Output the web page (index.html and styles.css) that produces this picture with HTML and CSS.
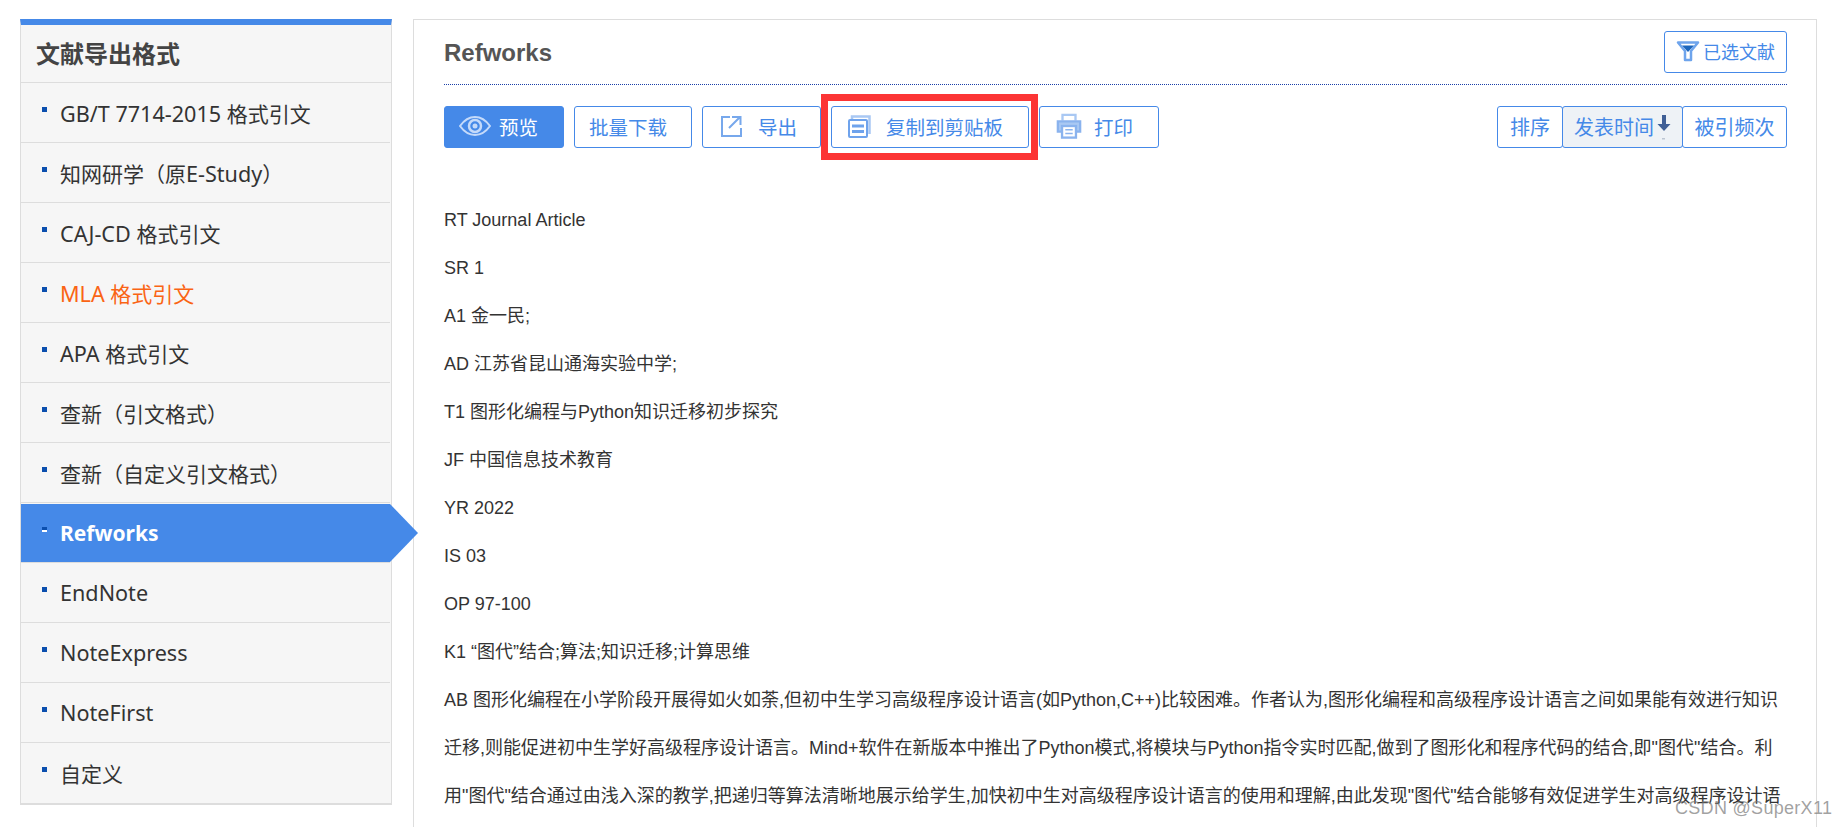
FILE: index.html
```html
<!DOCTYPE html>
<html lang="zh-CN">
<head>
    <meta charset="UTF-8">
    <title>文献导出格式</title>
    <link rel="stylesheet" href="styles.css">
</head>
<body>

<div class="page">
    <!-- 左侧格式列表 -->
    <div class="side">
        <h2 class="side-title">文献导出格式</h2>
        <ul class="side-list">
            <li><span class="dot"></span><span><span class="en">GB/T 7714-2015 </span>格式引文</span></li>
            <li><span class="dot"></span><span>知网研学（原<span class="en">E-Study</span>）</span></li>
            <li><span class="dot"></span><span><span class="en">CAJ-CD </span>格式引文</span></li>
            <li class="orange"><span class="dot"></span><span><span class="en">MLA </span>格式引文</span></li>
            <li><span class="dot"></span><span><span class="en">APA </span>格式引文</span></li>
            <li><span class="dot"></span><span>查新（引文格式）</span></li>
            <li><span class="dot"></span><span>查新（自定义引文格式）</span></li>
            <li class="current"><span class="dot"></span><span>Refworks</span></li>
            <li><span class="dot"></span><span class="en">EndNote</span></li>
            <li><span class="dot"></span><span class="en">NoteExpress</span></li>
            <li><span class="dot"></span><span class="en">NoteFirst</span></li>
            <li><span class="dot"></span><span>自定义</span></li>
        </ul>
    </div>

    <!-- 右侧内容 -->
    <div class="main">
        <div class="main-head">
            <h3 class="main-title">Refworks</h3>
            <a class="btn btn-filter">
                <svg width="24" height="24" viewBox="0 0 24 24"><path d="M2 3.500h20l-7 8.500v9h-6v-9z" fill="#fff" stroke="#6ea4ec" stroke-width="2.500" stroke-linejoin="round"/><path d="M6 6.500h12l-6 6.500z" fill="#1c66bd"/></svg>
                已选文献
            </a>
        </div>

        <div class="toolbar">
            <div class="tools">
                <a class="btn btn-preview">
                    <svg width="32" height="20" viewBox="0 0 32 20" fill="none" stroke="#c4dafa" stroke-width="2"><path d="M1 10C6 3 11 1 16 1s10 2 15 9c-5 7-10 9-15 9S6 17 1 10z"/><circle cx="16" cy="10" r="6" stroke-width="2.500"/><circle cx="16" cy="10" r="2.500" fill="#c4dafa" stroke="none"/></svg>
                    预览
                </a>
                <a class="btn btn-batch">批量下载</a>
                <a class="btn btn-export">
                    <svg width="22" height="22" viewBox="0 0 22 22" fill="none" stroke="#77a8ec" stroke-width="2"><path d="M10 2H2v19h19v-8"/><path d="M12 2h8.500v8M20 2L9 13"/></svg>
                    导出
                </a>
                <a class="btn btn-copy">
                    <svg width="23" height="23" viewBox="0 0 23 23" fill="none" stroke="#6fa3ec" stroke-width="2"><path d="M4 4V1.500h17.500V19" stroke="#a9c8f3" stroke-width="2.500"/><rect x="1" y="5" width="18" height="17" rx="1" fill="#fff"/><path d="M4 11h12M4 16.500h12" stroke-width="3"/></svg>
                    复制到剪贴板
                </a>
                <a class="btn btn-print">
                    <svg width="26" height="26" viewBox="0 0 28 28" fill="none" stroke="#8ab3ee" stroke-width="2.500"><path d="M7 8V2h14v6" stroke="#a9c8f3"/><path d="M6 20H2V9h24v11h-4" fill="#a9c8f3"/><rect x="6.500" y="14" width="15" height="12.500" fill="#fff"/><path d="M10 18h8M10 22h8" stroke-width="1.500"/></svg>
                    打印
                </a>
            </div>
            <div class="sort">
                <a class="btn sort-label">排序</a>
                <a class="btn sort-date">发表时间<svg width="14" height="32" viewBox="0 0 14 32"><path d="M5 5h4v9h4.500L7 21 .5 14H5z" fill="#3f5f96"/><rect x="5" y="28" width="3" height="1.500" fill="#bcc5d2"/></svg></a>
                <a class="btn sort-cite">被引频次</a>
            </div>
        </div>

        <div class="content">
            <p>RT Journal Article</p>
            <p>SR 1</p>
            <p>A1 金一民;</p>
            <p>AD 江苏省昆山通海实验中学;</p>
            <p>T1 图形化编程与Python知识迁移初步探究</p>
            <p>JF 中国信息技术教育</p>
            <p>YR 2022</p>
            <p>IS 03</p>
            <p>OP 97-100</p>
            <p>K1 “图代”结合;算法;知识迁移;计算思维</p>
            <p>AB 图形化编程在小学阶段开展得如火如荼,但初中生学习高级程序设计语言(如Python,C++)比较困难。作者认为,图形化编程和高级程序设计语言之间如果能有效进行知识迁移,则能促进初中生学好高级程序设计语言。Mind+软件在新版本中推出了Python模式,将模块与Python指令实时匹配,做到了图形化和程序代码的结合,即"图代"结合。利用"图代"结合通过由浅入深的教学,把递归等算法清晰地展示给学生,加快初中生对高级程序设计语言的使用和理解,由此发现"图代"结合能够有效促进学生对高级程序设计语言的学习。</p>
        </div>
    </div>
</div>

<div class="watermark">CSDN @SuperX11</div>

</body>
</html>
```

FILE: styles.css
```css
html, body {
    margin: 0;
    height: 100%;
    overflow: hidden;
    background-color: #FFFFFF;
}
.page {
    display: flex;
    gap: 21px;
    padding: 19px 30px 0 20px;
    align-items: flex-start;
}

/* 左侧列表 */
.side {
    width: 372px;
    box-sizing: border-box;
    flex: none;
    background-color: #f6f6f6;
    border: 1px solid #dddddd;
    border-top: 6px solid #4589e8;
    border-bottom: 2px solid #dddddd;
    font-family: "Noto Sans", "Noto Sans CJK SC", sans-serif;
}
.side-title {
    margin: 0;
    height: 58px;
    line-height: 57px;
    padding-left: 15px;
    font-size: 24px;
    font-weight: bold;
    color: #444444;
    box-sizing: border-box;
    border-bottom: 1px solid #dddddd;
}
.side-list {
    list-style: none;
    margin: 0;
    padding: 0;
}
.side-list li {
    position: relative;
    display: flex;
    align-items: center;
    height: 60px;
    box-sizing: border-box;
    padding-left: 21px;
    font-size: 21px;
    color: #333333;
    border-bottom: 1px solid #dddddd;
    margin-right: 1px;
}
.side-list li:last-child {
    border-bottom: none;
}
/* 西文比中文略大 */
.en {
    font-size: 21.6px;
}
.dot {
    width: 5px;
    height: 5px;
    margin-right: 13px;
    margin-bottom: 7px;
    background-color: #0b4fae;
    flex: none;
}
.side-list .orange {
    color: #fa6414;
}
.side-list .current {
    height: 59px;
    margin-top: 1px;
    background-color: #4589e8;
    color: #FFFFFF;
    font-weight: bold;
}
.current .dot {
    background: linear-gradient(#0b4fae 60%, #FFFFFF 60%);
}
/* 选中项的箭头 */
.current::after {
    content: "";
    position: absolute;
    top: 0;
    left: 100%;
    border-top: 29px solid transparent;
    border-bottom: 29px solid transparent;
    border-left: 28px solid #4589e8;
    z-index: 2;
}

/* 右侧内容 */
.main {
    flex: 1;
    height: 900px;
    box-sizing: border-box;
    border: 1px solid #dddddd;
    padding: 11px 29px 0 30px;
    font-family: "Liberation Sans", "Noto Sans CJK SC", sans-serif;
}
.main-head {
    display: flex;
    justify-content: space-between;
    align-items: center;
    padding-bottom: 11px;
    border-bottom: 1px dotted #1a3fa8;
}
.main-title {
    margin: 0;
    padding-top: 2px;
    font-size: 24px;
    font-weight: bold;
    color: #555555;
}

/* 按钮 */
.btn {
    display: flex;
    align-items: center;
    height: 42px;
    box-sizing: border-box;
    padding-bottom: 2px;
    border: 1px solid #4589e8;
    border-radius: 3px;
    color: #4589e8;
    font-size: 18px;
    white-space: nowrap;
}
.btn-filter {
    width: 123px;
    gap: 3px;
    justify-content: center;
}
.toolbar {
    display: flex;
    justify-content: space-between;
    margin-top: 21px;
}
.tools {
    display: flex;
    gap: 10px;
}
.sort {
    display: flex;
}
.tools .btn {
    font-size: 19.5px;
}
.sort .btn {
    font-size: 20px;
    justify-content: center;
}
.btn-preview {
    width: 120px;
    padding-left: 14px;
    gap: 8px;
    background-color: #4589e8;
    color: #FFFFFF;
}
.btn-batch {
    width: 118px;
    padding-left: 14px;
}
.btn-export {
    width: 119px;
    padding-left: 17px;
    gap: 16px;
}
.btn-copy {
    width: 198px;
    padding-left: 16px;
    gap: 15px;
    position: relative;
}
/* 截图上的红色标注框 */
.btn-copy::after {
    content: "";
    position: absolute;
    top: -13px;
    left: -11px;
    right: -10px;
    bottom: -13px;
    border: 7px solid #fc3535;
}
.btn-print {
    width: 120px;
    padding-left: 16px;
    gap: 12px;
}
.sort-label {
    width: 66px;
}
.sort-date {
    width: 121px;
    margin-left: -1px;
    background-color: #eef2f6;
    gap: 3px;
}
.sort-cite {
    width: 105px;
    margin-left: -1px;
}

/* 正文 */
.content {
    margin-top: 48px;
    font-size: 18px;
    color: #333333;
    line-height: 48px;
}
.content p {
    margin: 0;
}

/* 水印 */
.watermark {
    position: absolute;
    top: 798px;
    left: 1675px;
    font-family: "Liberation Sans", sans-serif;
    font-size: 18px;
    letter-spacing: 0.3px;
    color: rgba(120, 120, 120, 0.7);
    white-space: nowrap;
}
```
